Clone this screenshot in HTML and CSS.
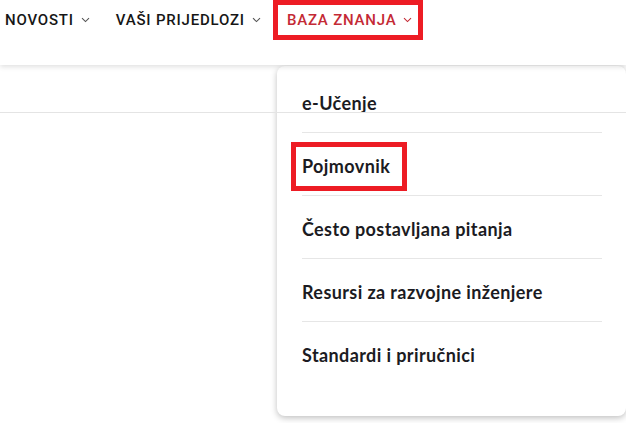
FILE: index.html
```html
<!DOCTYPE html>
<html>
  <head>
    <title>Baza znanja</title>
    <meta charset="utf-8" />
    <meta name="viewport" content="width=device-width, initial-scale=1" />
    <link rel="stylesheet" href="styles.css">
  </head>
  <body>
    <header class="header">
      <nav class="nav">
        <a class="nav-item" href="#">NOVOSTI
          <svg class="chevron" width="9" height="6" viewBox="0 0 9 6"><path d="M1 1.2 4.5 4.6 8 1.2" /></svg>
        </a>
        <a class="nav-item" href="#">VAŠI PRIJEDLOZI
          <svg class="chevron" width="9" height="6" viewBox="0 0 9 6"><path d="M1 1.2 4.5 4.6 8 1.2" /></svg>
        </a>
        <a class="nav-item active marked" href="#">BAZA ZNANJA
          <svg class="chevron" width="9" height="6" viewBox="0 0 9 6"><path d="M1 1.2 4.5 4.6 8 1.2" /></svg>
        </a>
      </nav>
    </header>

    <main class="page">
      <div class="toolbar"></div>

      <div class="dropdown">
        <ul class="menu">
          <li class="menu-item"><a href="#">e-Učenje</a></li>
          <li class="menu-item"><a class="marked-link" href="#">Pojmovnik</a></li>
          <li class="menu-item"><a href="#">Često postavljana pitanja</a></li>
          <li class="menu-item"><a href="#">Resursi za razvojne inženjere</a></li>
          <li class="menu-item"><a href="#">Standardi i priručnici</a></li>
        </ul>
      </div>
    </main>
  </body>
</html>
```

FILE: styles.css
```css
body {
  margin: 0;
  background-color: #fff;
  overflow: hidden;
}
a {
  text-decoration: none;
  color: inherit;
}
.header {
  position: relative;
  z-index: 3;
  height: 65px;
  background-color: #fff;
  box-shadow: 0 2px 5px rgba(0, 0, 0, 0.12);
}
.nav {
  display: flex;
  gap: 1px;
  margin-left: -9px;
}
.nav-item {
  display: flex;
  align-items: center;
  gap: 7px;
  height: 30px;
  padding: 0 6px 0 9px;
  border: 5px solid transparent;
  font-family: Roboto, "Liberation Sans", sans-serif;
  font-weight: 500;
  font-size: 15px;
  letter-spacing: 0.8px;
  color: #161616;
  white-space: nowrap;
}
.chevron {
  fill: none;
  stroke: #555;
  stroke-width: 1.1;
}
.nav-item.active {
  color: #c42a35;
}
.nav-item.active .chevron {
  stroke: #c42a35;
}
.marked {
  border-color: #ed1c24;
}
.page {
  position: relative;
  height: 358px;
}
.toolbar {
  position: relative;
  z-index: 2;
  height: 47px;
  border-bottom: 1px solid #e4e4e4;
}
.dropdown {
  position: absolute;
  z-index: 1;
  top: 1px;
  left: 277px;
  width: 349px;
  height: 350px;
  box-sizing: border-box;
  padding: 4px 24px 0 25px;
  background-color: #fff;
  border-radius: 8px;
  box-shadow: 0 2px 6px rgba(0, 0, 0, 0.25);
}
.menu {
  list-style: none;
  margin: 0;
  padding: 0;
}
.menu-item {
  padding: 23px 0 18px;
  line-height: 21px;
  border-bottom: 1px solid #e6e6e6;
  font-family: Lato, "Liberation Sans", sans-serif;
  font-weight: 700;
  font-size: 18px;
  letter-spacing: 0.4px;
  color: #1b1b22;
  white-space: nowrap;
}
.menu-item:last-child {
  border-bottom: none;
}
.marked-link {
  display: inline-block;
  padding: 9px 12px 9px 6px;
  margin: -14px 0 -14px -11px;
  border: 5px solid #ed1c24;
}
```
